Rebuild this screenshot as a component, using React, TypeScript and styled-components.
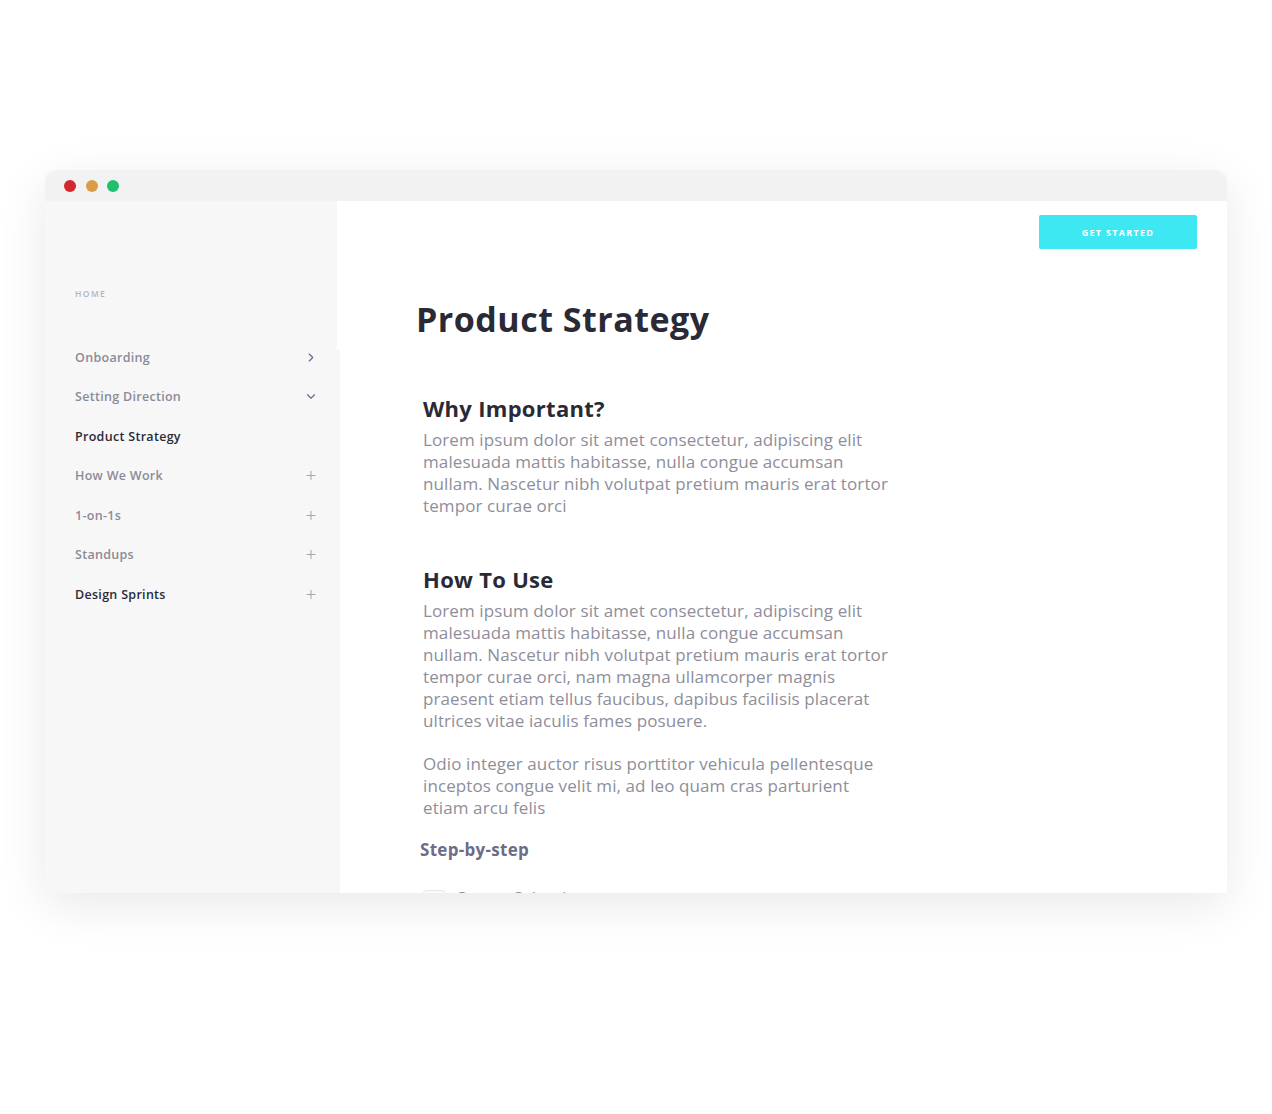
import React from "react";
import styled, { createGlobalStyle } from "styled-components";
import { ChevronRight, ChevronDown, Plus } from "lucide-react";

const GlobalStyle = createGlobalStyle`
  html, body { margin: 0; padding: 0; background: #ffffff; }
  body { font-family: "Open Sans", "Liberation Sans", sans-serif; }
  * { box-sizing: border-box; }
`;

const Page = styled.div`
  width: 1272px;
  height: 1114px;
  padding: 170px 45px 0 45px;
  background: #ffffff;
`;

const Window = styled.div`
  width: 1182px;
  height: 723px;
  border-radius: 12px 12px 0 0;
  background: #ffffff;
  box-shadow: 0 12px 50px rgba(0, 0, 0, 0.09);
  overflow: hidden;
  display: flex;
  flex-direction: column;
`;

const TitleBar = styled.div`
  height: 31px;
  flex: none;
  background: #f2f2f2;
  display: flex;
  align-items: center;
  gap: 9.5px;
  padding-left: 19px;
`;

const Dot = styled.span<{ $color: string }>`
  width: 12px;
  height: 12px;
  border-radius: 50%;
  background: ${(p) => p.$color};
`;

const Body = styled.div`
  flex: 1;
  min-height: 0;
  display: flex;
`;

const Sidebar = styled.aside`
  width: 292px;
  flex: none;
  background: #f7f7f7;
  display: flex;
  flex-direction: column;
  position: relative;
  z-index: 1;
`;

const SidebarTop = styled.div`
  height: 149px;
  padding: 88px 0 0 30px;
`;

const HomeLabel = styled.div`
  font-size: 8.5px;
  line-height: 10px;
  font-weight: 600;
  letter-spacing: 1.4px;
  color: #b4b4bc;
`;

const Nav = styled.nav`
  flex: 1;
  margin-right: -3px;
  background: #f7f7f7;
  padding: 0 22px 0 30px;
  display: flex;
  flex-direction: column;
  gap: 25.6px;
`;

const NavItem = styled.div<{ $active?: boolean }>`
  height: 14px;
  display: flex;
  align-items: center;
  justify-content: space-between;
  font-size: 12.5px;
  font-weight: 600;
  letter-spacing: 0.3px;
  color: ${(p) => (p.$active ? "#2b2b38" : "#8b8b98")};
`;

const IconSlot = styled.span<{ $tone: "dark" | "light" }>`
  width: 14px;
  height: 14px;
  display: flex;
  align-items: center;
  justify-content: center;
  color: ${(p) => (p.$tone === "dark" ? "#6c6c88" : "#9e9ea6")};
`;

const Main = styled.main`
  flex: 1;
  min-width: 0;
  padding: 14px 30px 0 79px;
  display: flex;
  flex-direction: column;
`;

const TopBar = styled.div`
  display: flex;
  justify-content: flex-end;
`;

const StartButton = styled.button`
  width: 158px;
  height: 34px;
  border: none;
  border-radius: 2px;
  background: #3ee8f2;
  color: #ffffff;
  font-family: "Open Sans", sans-serif;
  font-size: 9px;
  font-weight: 700;
  letter-spacing: 1.3px;
`;

const Title = styled.h1`
  margin: 49px 0 0 0;
  font-size: 34px;
  line-height: 42px;
  font-weight: 700;
  color: #2a2a36;
  letter-spacing: 0.5px;
`;

const Section = styled.section<{ $gap: number }>`
  margin-top: ${(p) => p.$gap}px;
  padding-left: 7px;
`;

const Heading = styled.h2`
  margin: 0 0 8px 0;
  font-size: 22px;
  line-height: 26px;
  font-weight: 700;
  color: #2a2a36;
  letter-spacing: 0.3px;
`;

const Paragraph = styled.p<{ $gap?: number }>`
  margin: ${(p) => p.$gap ?? 0}px 0 0 0;
  font-size: 17px;
  line-height: 22px;
  color: #8e8e9a;
  letter-spacing: 0.1px;
  white-space: nowrap;
`;

const StepTitle = styled.h3`
  margin: 20px 0 0 -3px;
  font-size: 17px;
  line-height: 22px;
  font-weight: 700;
  color: #6c6c88;
  letter-spacing: 0.3px;
`;

const StepRow = styled.div`
  margin-top: 27px;
  display: flex;
  align-items: center;
  gap: 12px;
`;

const CheckBox = styled.span`
  width: 22px;
  height: 16px;
  border: 1px solid #e6e6ea;
  border-radius: 3px;
  background: #fafafa;
`;

const StepText = styled.span`
  font-size: 17px;
  line-height: 20px;
  color: #8e8e9a;
`;

const navItems: { label: string; icon: "right" | "down" | "plus" | null; active?: boolean }[] = [
  { label: "Onboarding", icon: "right" },
  { label: "Setting Direction", icon: "down" },
  { label: "Product Strategy", icon: null, active: true },
  { label: "How We Work", icon: "plus" },
  { label: "1-on-1s", icon: "plus" },
  { label: "Standups", icon: "plus" },
  { label: "Design Sprints", icon: "plus", active: true },
];

function NavIcon({ kind }: { kind: "right" | "down" | "plus" | null }) {
  if (kind === "right")
    return (
      <IconSlot $tone="dark">
        <ChevronRight size={15} strokeWidth={2} />
      </IconSlot>
    );
  if (kind === "down")
    return (
      <IconSlot $tone="dark">
        <ChevronDown size={15} strokeWidth={2} />
      </IconSlot>
    );
  if (kind === "plus")
    return (
      <IconSlot $tone="light">
        <Plus size={17} strokeWidth={1.6} />
      </IconSlot>
    );
  return null;
}

const Lines = ({ lines }: { lines: string[] }) => (
  <>
    {lines.map((l, i) => (
      <React.Fragment key={i}>
        {l}
        {i < lines.length - 1 && <br />}
      </React.Fragment>
    ))}
  </>
);

export default function App() {
  return (
    <>
      <GlobalStyle />
      <Page>
        <Window>
          <TitleBar>
            <Dot $color="#d3282e" />
            <Dot $color="#da9c44" />
            <Dot $color="#20bf6b" />
          </TitleBar>
          <Body>
            <Sidebar>
              <SidebarTop>
                <HomeLabel>HOME</HomeLabel>
              </SidebarTop>
              <Nav>
                {navItems.map((item) => (
                  <NavItem key={item.label} $active={item.active}>
                    <span>{item.label}</span>
                    <NavIcon kind={item.icon} />
                  </NavItem>
                ))}
              </Nav>
            </Sidebar>
            <Main>
              <TopBar>
                <StartButton>GET STARTED</StartButton>
              </TopBar>
              <Title>Product Strategy</Title>
              <Section $gap={55}>
                <Heading>Why Important?</Heading>
                <Paragraph>
                  <Lines
                    lines={[
                      "Lorem ipsum dolor sit amet consectetur, adipiscing elit",
                      "malesuada mattis habitasse, nulla congue accumsan",
                      "nullam. Nascetur nibh volutpat pretium mauris erat tortor",
                      "tempor curae orci",
                    ]}
                  />
                </Paragraph>
              </Section>
              <Section $gap={49}>
                <Heading>How To Use</Heading>
                <Paragraph>
                  <Lines
                    lines={[
                      "Lorem ipsum dolor sit amet consectetur, adipiscing elit",
                      "malesuada mattis habitasse, nulla congue accumsan",
                      "nullam. Nascetur nibh volutpat pretium mauris erat tortor",
                      "tempor curae orci, nam magna ullamcorper magnis",
                      "praesent etiam tellus faucibus, dapibus facilisis placerat",
                      "ultrices vitae iaculis fames posuere.",
                    ]}
                  />
                </Paragraph>
                <Paragraph $gap={21}>
                  <Lines
                    lines={[
                      "Odio integer auctor risus porttitor vehicula pellentesque",
                      "inceptos congue velit mi, ad leo quam cras parturient",
                      "etiam arcu felis",
                    ]}
                  />
                </Paragraph>
                <StepTitle>Step-by-step</StepTitle>
                <StepRow>
                  <CheckBox />
                  <StepText>Set up Calendar event</StepText>
                </StepRow>
              </Section>
            </Main>
          </Body>
        </Window>
      </Page>
    </>
  );
}
